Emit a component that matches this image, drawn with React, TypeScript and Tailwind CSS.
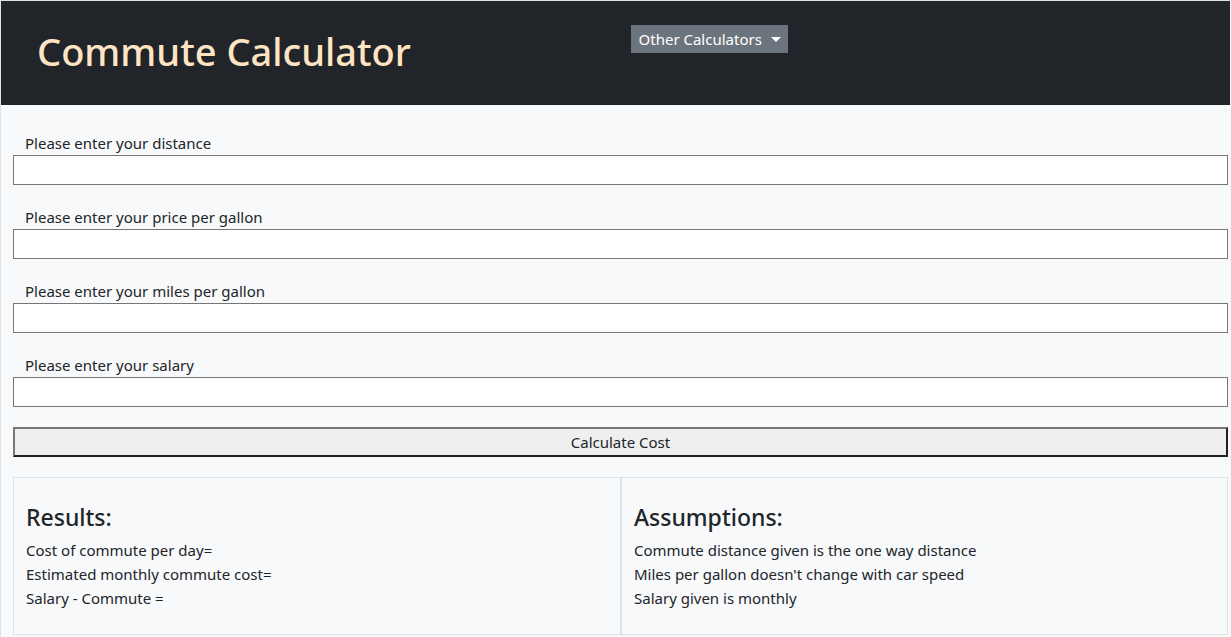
import React from "react";

const font = { fontFamily: '"Noto Sans", "Open Sans", sans-serif' };

function Field({ label }: { label: string }) {
  return (
    <div className="flex flex-col">
      <label className="pl-[12px] text-[15px] leading-[24px] text-[#212529]">{label}</label>
      <input type="text" className="h-[30px] w-full border border-[#767676] bg-white" />
    </div>
  );
}

export default function App() {
  return (
    <div style={font} className="min-h-[637px] w-[1231px] border-l border-t border-[#dee2e6] bg-[#f8f9fa]">
      <header className="mr-[1px] flex h-[104px] bg-[#212529]">
        <div className="flex w-[615px] items-center pb-[4px] pl-[36px]">
          <h1 className="text-[38px] font-medium leading-none text-[#ffe4c4]">Commute Calculator</h1>
        </div>
        <div className="w-[615px] pl-[15px] pt-[24px]">
          <button className="flex h-[28px] items-center gap-[9px] bg-[#6c757d] pl-[8px] pr-[7px] text-[15px] text-white">
            Other Calculators
            <span className="inline-block h-0 w-0 border-x-[5px] border-t-[5px] border-x-transparent border-t-white" />
          </button>
        </div>
      </header>
      <main className="flex flex-col gap-[20px] pl-[12px] pr-[3px] pt-[26px]">
        <Field label="Please enter your distance" />
        <Field label="Please enter your price per gallon" />
        <Field label="Please enter your miles per gallon" />
        <Field label="Please enter your salary" />
        <button className="h-[30px] w-full border-2 border-b-[#212121] border-l-[#767676] border-r-[#212121] border-t-[#767676] bg-[#efefef] text-[15px] text-[#212529]">
          Calculate Cost
        </button>
        <div className="flex">
          <div className="w-[608px] border border-[#dee2e6] px-[12px] pb-[24px] pt-[23px] text-[#212529]">
            <h3 className="mb-[4px] text-[23px] font-medium leading-[33px]">Results:</h3>
            <p className="text-[15px] leading-[24px]">Cost of commute per day=</p>
            <p className="text-[15px] leading-[24px]">Estimated monthly commute cost=</p>
            <p className="text-[15px] leading-[24px]">Salary - Commute =</p>
          </div>
          <div className="flex-1 border border-[#dee2e6] px-[12px] pb-[24px] pt-[23px] text-[#212529]">
            <h3 className="mb-[4px] text-[23px] font-medium leading-[33px]">Assumptions:</h3>
            <p className="text-[15px] leading-[24px]">Commute distance given is the one way distance</p>
            <p className="text-[15px] leading-[24px]">Miles per gallon doesn't change with car speed</p>
            <p className="text-[15px] leading-[24px]">Salary given is monthly</p>
          </div>
        </div>
      </main>
    </div>
  );
}
